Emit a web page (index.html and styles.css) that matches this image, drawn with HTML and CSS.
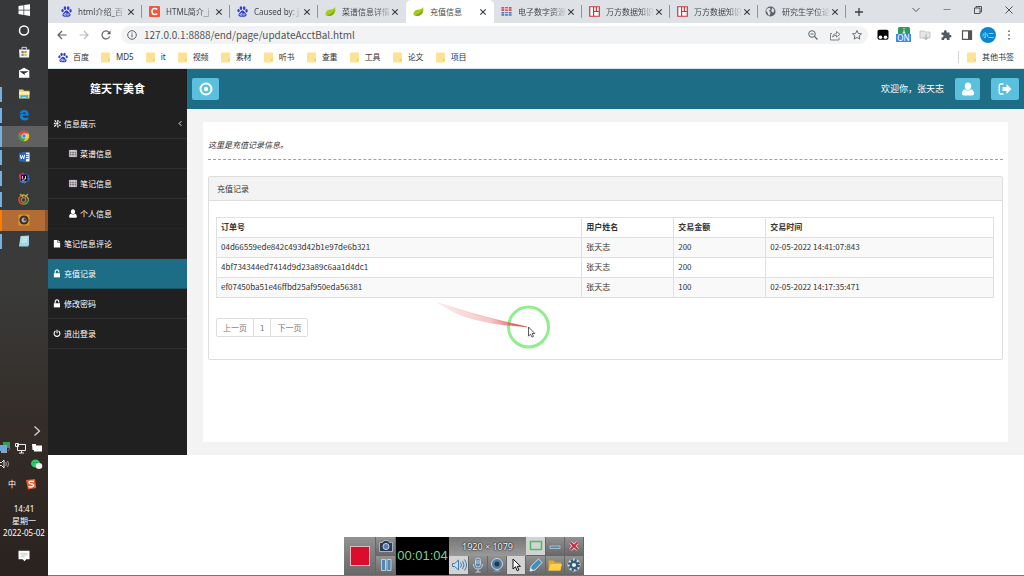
FILE: index.html
```html
<!DOCTYPE html>
<html lang="zh-CN">
<head>
<meta charset="utf-8">
<title>充值信息</title>
<link rel="stylesheet" href="styles.css">
</head>
<body>
<svg class="defs" aria-hidden="true">
  <symbol id="paw" viewBox="0 0 12 12"><g fill="#2e3fd0"><ellipse cx="4.3" cy="2.3" rx="1.4" ry="2"/><ellipse cx="7.8" cy="2.3" rx="1.4" ry="2"/><ellipse cx="1.7" cy="5" rx="1.3" ry="1.8"/><ellipse cx="10.4" cy="5.2" rx="1.3" ry="1.8"/><path d="M6 5c1.800 0 2.200 1.800 3.500 2.900 1.600 1.500.8 3.700-1.200 3.700H3.700C1.700 11.600.9 9.400 2.500 7.900 3.800 6.800 4.200 5 6 5z"/></g><path d="M5.300 7.300v2.900H4.200c-1.300 0-1.300-1.900 0-1.900h1M6.700 8.100v1.600c0 .6 1.700.6 1.700 0V8.100" fill="none" stroke="#fff" stroke-width=".7"/></symbol>
  <symbol id="leaf" viewBox="0 0 12 12"><path d="M.8 10.200C-.4 4.500 4 4 7 3.700 9.300 3.400 10.300 2.500 10.900 1.200c1.500 5.100-1.200 9.500-6 9.500-1 0-2-.1-2.800-.6z" fill="#a8ca1c"/><path d="M1.200 10.300C4.500 9.800 8.500 8.300 10.500 4c-.3 4.500-3 6.700-6.300 6.700-1.200 0-2.200-.1-3-.4z" fill="#6b9e18"/></symbol>
  <symbol id="wan" viewBox="0 0 12 12"><path d="M.8.800h10.400v10.400H.8zM5 .8v10.400M5 6h6M8 .8V6" fill="#fff" stroke="#c8343a" stroke-width="1.300"/></symbol>
  <symbol id="globe" viewBox="0 0 12 12"><circle cx="6" cy="6" r="5.500" fill="#5f6368"/><path d="M1 5l2-2.500 2.500-.5.500 2-2 1.200 2 1.300-.5 3-1.500 1-1-3zM8 2l2 2-.5 3-2-.5-.5-2z" fill="#dee1e6"/></symbol>
  <symbol id="folder" viewBox="0 0 10 11"><path d="M0 1.500Q0 .5 1 .5h7q1 0 1 1v8q0 1-1 1H1q-1 0-1-1z" fill="#fde293"/><path d="M7 7h1.500v1.500H7z" fill="#e9c35e"/></symbol>
  <symbol id="x" viewBox="0 0 8 8"><path d="M1.300 1.300l5.400 5.400M6.700 1.300L1.300 6.700" fill="none" stroke="#3c4043" stroke-width="1.200"/></symbol>
  <symbol id="table" viewBox="0 0 10 10"><path d="M1 1.500h8v7H1z" fill="#b9b4bd"/><path d="M1 1.500h8v7H1zM1 4h8M1 6.200h8M3.700 1.500v7M6.300 1.500v7" fill="none" stroke="#f0e6ee" stroke-width=".7"/><path d="M1.400 4.100h2M4 4.100h2M6.700 4.100h2M1.400 6.300h2M4 6.300h2M6.700 6.300h2" stroke="#39353b" stroke-width=".8"/></symbol>
  <symbol id="user" viewBox="0 0 14 14"><path d="M7 .5c2 0 3.300 1.500 3.300 3.700S8.800 8 7 8 3.700 6.400 3.700 4.200 5 .5 7 .5zM4 7.300C5 9 9 9 10 7.300c2 .4 3 2 3 4.200 0 1.200-.7 2-1.800 2H2.800c-1.100 0-1.800-.8-1.800-2 0-2.200 1-3.800 3-4.200z" fill="#fff"/></symbol>
  <symbol id="lock" viewBox="0 0 10 10"><path d="M1.500 4.700h6.800v4.600H1.500z" fill="#fff"/><path d="M3 5V3q0-2 2-2t2 2v.8" fill="none" stroke="#fff" stroke-width="1.200"/></symbol>
</svg>

<aside class="taskbar">
  <nav class="apps" aria-label="任务栏">
    <button class="app" aria-label="开始"><svg viewBox="0 0 14 14"><path d="M1.500 3l5-.8v4.500h-5zM7.200 2.100L13 1.200v5.500H7.200zM1.500 7.400h5v4.500l-5-.8zM7.200 7.400H13v5.500L7.200 12z" fill="#fff"/></svg></button>
    <button class="app" aria-label="Cortana"><svg viewBox="0 0 14 14"><circle cx="7" cy="6.500" r="4.500" fill="none" stroke="#fff" stroke-width="1.500"/></svg></button>
    <button class="app" aria-label="应用商店"><svg viewBox="0 0 14 14"><path d="M2 4.500h10.500l-.5 8H2.500z" fill="#f4f4f4"/><path d="M5 4.500V2.300h4.400v2.200" fill="none" stroke="#ddd" stroke-width="1"/><path d="M4.500 6h2.200v2.200H4.500z" fill="#e8512b"/><path d="M7.400 6h2.200v2.200H7.400z" fill="#7eb532"/><path d="M4.500 8.900h2.200V11H4.500z" fill="#34a5de"/><path d="M7.400 8.900h2.200V11H7.400z" fill="#f5b52a"/></svg></button>
    <button class="app" aria-label="邮件"><svg viewBox="0 0 14 14"><path d="M2 4.500L7 1.800l5.300 2.700v7.200H2z" fill="#fff"/><path d="M2.500 5.300h9.200L7.200 7.800l1.600 2z" fill="#333"/></svg></button>
    <button class="app open" aria-label="文件资源管理器"><svg viewBox="0 0 14 14"><path d="M2 2.500h4l1 1.300h5.500v7.800H2z" fill="#f3d36e"/><path d="M2 5h10.500v2.500H2z" fill="#fff0b2"/><path d="M3.500 12V8.200h7.500V12H9.300v-2H5.200v2z" fill="#45b4dd"/></svg></button>
    <button class="app open" aria-label="Edge"><svg viewBox="0 0 14 14"><path d="M2.500 6C3 3 5 2 7.300 2c3 0 4.500 2 4.500 5.500H5.500c0 2.800 3.700 3 5.700 1.700v2.300C7 13.500 2.700 12 3 8.200 3.200 6 4.500 5 6 4.400 4.500 4.500 3.300 5.200 2.500 6zM5.600 6h3.300c0-2.400-3-2.300-3.300 0z" fill="#1180d8" fill-rule="evenodd"/></svg></button>
    <button class="app open current" aria-label="Chrome"><svg viewBox="0 0 14 14"><circle cx="7" cy="7" r="5.300" fill="#f9c81e"/><path d="M2.300 4.400A5.300 5.300 0 0 1 11.700 4.400H7L4.700 8.300z" fill="#e64234"/><path d="M2.300 4.400A5.300 5.300 0 0 0 6.500 12.300L9.200 8.400 4.700 8.300z" fill="#32a350"/><circle cx="7" cy="7" r="2.500" fill="#fff"/><circle cx="7" cy="7" r="1.900" fill="#4285f4"/></svg></button>
    <button class="app open" aria-label="Word"><svg viewBox="0 0 14 14"><path d="M6 2.500h6.500v9H6z" fill="#fff"/><path d="M8.500 4.500h3M8.500 6.500h3M8.500 8.500h3" stroke="#4a83cc"/><path d="M2 3l7-1.200v10.600L2 11.200z" fill="#2868b8"/><path d="M3.300 5l1 4 1.200-3.600 1.200 3.600 1-4.200" fill="none" stroke="#fff"/></svg></button>
    <button class="app open" aria-label="IntelliJ IDEA"><svg viewBox="0 0 14 14"><path d="M2 4l4-2.500L9 5 7 12 2.500 8z" fill="#e73370"/><path d="M8 2.500l3.500 1.200L12.500 9 8 12.500 2.500 11z" fill="#367bd9"/><path d="M4 3.500h6.500V10H4z" fill="#1b1023"/><path d="M5.500 5v3M8.500 5v3H7M5 9.200h2.500" stroke="#fff" stroke-width=".8" fill="none"/></svg></button>
    <button class="app open" aria-label="Navicat"><svg viewBox="0 0 14 14" fill="none" stroke-width="1.300"><path d="M4 4a4.300 4.300 0 0 0 2 8" stroke="#e84c35"/><path d="M6 12a4.500 4.500 0 0 0 5.500-5" stroke="#48b55c"/><path d="M4 4q4-3 7.500 3" stroke="#e9a928"/><circle cx="6.500" cy="8" r="2.300" stroke="#b87a40"/><path d="M3 2l3 3M11 2L8 5" stroke="#9dbb45"/></svg></button>
    <button class="app open recording" aria-label="录屏"><svg viewBox="0 0 14 14"><rect x="1.500" y="1.500" width="11" height="11" rx="1" fill="#e49520"/><circle cx="7" cy="7" r="4.600" fill="#303038"/><circle cx="7" cy="7" r="2.500" fill="#b9aaa0"/><circle cx="8" cy="6.500" r="1.300" fill="#463b38"/></svg></button>
    <button class="app open" aria-label="记事本"><svg viewBox="0 0 14 14"><path d="M3.500 2l8.500-.5v9.500L11 12.500H2z" fill="#a6d5dd"/><path d="M4.500 4l6-.3M4.300 6l6-.3M4 8l6-.3" stroke="#d9f0f3"/><path d="M2 12.500h9l1-1.700" stroke="#5e8b93" fill="none"/></svg></button>
  </nav>
  <div class="tray">
    <svg class="chevron" viewBox="0 0 48 18"><path d="M34.500 4.500L39.500 9l-5 4.500" fill="none" stroke="#ddd" stroke-width="1.200"/></svg>
    <svg viewBox="0 0 48 16"><path d="M3 2h7v6H3z" fill="#3a9a5b"/><path d="M0 5h7v6H0z" fill="#6ba8dd"/><path d="M1 12h6" stroke="#b8cbe0" stroke-width="1.500"/><path d="M8 11l2-3" stroke="#d74831"/><path d="M17.500 4.500h8v6h-8zM19 13h5M21.500 10.500V13M15.500 3.500h3v3h-3z" fill="none" stroke="#eee"/><path d="M34 5.500h8v6h-8zM32 4h4v2h-2v4h-1.500z" fill="#fff"/></svg>
    <svg viewBox="0 0 48 16"><path d="M0 6.500h1.500L4 4v8L1.500 9.500H0" fill="none" stroke="#eee"/><path d="M5.700 6q1.500 2 0 4M7.500 5q2.200 3 0 6" fill="none" stroke="#aaa" stroke-width=".9"/><ellipse cx="35.500" cy="7.500" rx="4.500" ry="4" fill="#27cf68"/><ellipse cx="39" cy="10" rx="3.300" ry="2.900" fill="#eee"/><circle cx="34" cy="6.500" r=".6" fill="#176b39"/><circle cx="37" cy="6.500" r=".6" fill="#176b39"/></svg>
    <div class="ime"><span>中</span><svg viewBox="0 0 12 12"><path d="M1 2l9-1 1.300 9L3 11.500z" fill="#ec5a2c"/><path d="M9 3.500Q3.500 2.500 4 4.800 4.500 6 6.500 6q3 .5 2 2Q7 9.500 3.500 8.600" fill="none" stroke="#fff" stroke-width="1.400"/></svg></div>
    <time class="clock"><span>14:41</span><span>星期一</span><span>2022-05-02</span></time>
    <button class="notice" aria-label="通知"><svg viewBox="0 0 12 12"><path d="M.5.800h11v8.500H8.300L6.500 11.200 4.700 9.300H.5z" fill="#fff"/><path d="M2.500 3.300h7M2.500 5h7M2.500 6.700h4" stroke="#aaa" stroke-width=".6"/></svg></button>
  </div>
</aside>

<div class="browser">
  <div class="tabs">
    <div class="tab"><svg><use href="#paw"/></svg><span class="fade">html介绍_百</span><button aria-label="关闭"><svg><use href="#x"/></svg></button></div>
    <div class="tab"><svg viewBox="0 0 12 12"><rect width="12" height="12" rx="1" fill="#f1573a"/><path d="M9 3.800Q8 2.700 6.300 2.700 3.200 2.700 3.200 6t3.100 3.300Q8 9.300 9 8.200" fill="none" stroke="#fff" stroke-width="1.500"/></svg><span class="fade">HTML简介_j</span><button aria-label="关闭"><svg><use href="#x"/></svg></button></div>
    <div class="tab"><svg><use href="#paw"/></svg><span class="fade">Caused by: j</span><button aria-label="关闭"><svg><use href="#x"/></svg></button></div>
    <div class="tab last"><svg><use href="#leaf"/></svg><span class="fade">菜谱信息详情</span><button aria-label="关闭"><svg><use href="#x"/></svg></button></div>
    <div class="tab active"><svg><use href="#leaf"/></svg><span>充值信息</span><button aria-label="关闭"><svg><use href="#x"/></svg></button></div>
    <div class="tab"><svg viewBox="0 0 12 12"><path d="M.5 1h3v4.500h-3zM4.500 1h3v1.800h-3zM4.500 3.500h3v2h-3zM8.500 1h3v4.500h-3z" fill="#dc4a52"/><path d="M.5 6.500h3v4h-3zM4.500 6.500h3v1.500h-3zM4.500 8.700h3v1.800h-3zM8.500 6.500h3v4h-3z" fill="#4d78bd"/><path d="M0 3.200h12M0 8.400h12" stroke="#e6d8e2" stroke-width=".6"/></svg><span class="fade">电子数字资源</span><button aria-label="关闭"><svg><use href="#x"/></svg></button></div>
    <div class="tab"><svg><use href="#wan"/></svg><span class="fade">万方数据知识</span><button aria-label="关闭"><svg><use href="#x"/></svg></button></div>
    <div class="tab"><svg><use href="#wan"/></svg><span class="fade">万方数据知识</span><button aria-label="关闭"><svg><use href="#x"/></svg></button></div>
    <div class="tab"><svg><use href="#globe"/></svg><span class="fade">研究生学位论</span><button aria-label="关闭"><svg><use href="#x"/></svg></button></div>
    <button class="newtab" aria-label="新标签页"><svg viewBox="0 0 10 10"><path d="M5 1v8M1 5h8" stroke="#3c4043" stroke-width="1.300"/></svg></button>
    <div class="window">
      <button aria-label="搜索标签"><svg viewBox="0 0 10 10"><path d="M1.500 3L5 6.500 8.500 3" fill="none" stroke="#555"/></svg></button>
      <button aria-label="最小化"><svg viewBox="0 0 10 10"><path d="M1.500 4.500h7" stroke="#888"/></svg></button>
      <button aria-label="还原"><svg viewBox="0 0 10 10"><path d="M1.500 3h5.500v5.500H1.500zM3 3V1.500h5.500V7H7" fill="none" stroke="#444" stroke-width=".9"/></svg></button>
      <button aria-label="关闭窗口"><svg viewBox="0 0 10 10"><path d="M1.500 1.500l7 7M8.500 1.500l-7 7" stroke="#444" stroke-width=".9"/></svg></button>
    </div>
  </div>

  <div class="toolbar">
    <button aria-label="后退"><svg viewBox="0 0 12 12"><path d="M10.500 6H2M6 2L2 6l4 4" fill="none" stroke="#5f6368" stroke-width="1.200"/></svg></button>
    <button aria-label="前进"><svg viewBox="0 0 12 12"><path d="M1.500 6H10M6 2l4 4-4 4" fill="none" stroke="#bbb" stroke-width="1.200"/></svg></button>
    <button aria-label="重新加载"><svg viewBox="0 0 12 12"><path d="M9.700 7.500A4 4 0 1 1 9 3.300L10 4.500" fill="none" stroke="#5f6368" stroke-width="1.200"/><path d="M10.500 1.500v3.700H6.800z" fill="#5f6368"/></svg></button>
    <div class="omnibox">
      <svg viewBox="0 0 12 12"><circle cx="6" cy="6" r="4.300" fill="none" stroke="#5f6368"/><path d="M6 5.300v3M6 3.400v1.100" stroke="#5f6368" stroke-width="1.100"/></svg>
      <input type="text" aria-label="地址" value="127.0.0.1:8888/end/page/updateAcctBal.html">
      <button aria-label="缩放"><svg viewBox="0 0 12 12"><circle cx="5" cy="5" r="3.300" fill="none" stroke="#5f6368"/><path d="M7.500 7.500l3 3M3.500 5h3" stroke="#5f6368" stroke-width="1.100"/></svg></button>
      <button aria-label="分享"><svg viewBox="0 0 12 12"><path d="M3 4.500H1.500V11H10V8.500M3.500 8q.5-3.500 4-3.500V2.500L11 5.300 7.500 8V6.300Q5 6.300 3.500 8z" fill="none" stroke="#777" stroke-width=".9"/></svg></button>
      <button aria-label="收藏"><svg viewBox="0 0 12 12"><path d="M6 1.500l1.300 3 3.200.3-2.400 2.100.7 3.200L6 8.400 3.200 10.100l.7-3.200L1.500 4.800l3.200-.3z" fill="none" stroke="#5f6368" stroke-width=".9"/></svg></button>
    </div>
    <div class="extensions">
      <button aria-label="脚本扩展"><svg viewBox="0 0 12 12"><rect x=".5" y=".8" width="11" height="10" rx="1.800" fill="#050505"/><circle cx="3.500" cy="8.300" r="1.800" fill="#fff"/><circle cx="8.500" cy="8.300" r="1.800" fill="#fff"/></svg></button>
      <button class="ext-on" aria-label="扩展开关"><svg viewBox="0 0 12 7"><path d="M0 1.500Q0 0 1.500 0h9Q12 0 12 1.500V7H0z" fill="#2c9c56"/><path d="M6 1v1.200M6 3v3M4.500 6h3" stroke="#fff"/></svg><span>ON</span></button>
      <button aria-label="下载扩展"><svg viewBox="0 0 12 12"><path d="M1 2h4l1 1h5v6H1z" fill="#e7e7e7" stroke="#bbb" stroke-width=".8"/><path d="M7 5v5M5 8.500L7 10.800 9 8.500" stroke="#aaa" fill="none"/></svg></button>
      <button aria-label="扩展程序"><svg viewBox="0 0 12 12"><path d="M1.500 3.500H4q-.5-2.500 1.300-2.500T6.700 3.500H9.500V6q2-.5 2 1.200T9.500 8.500V11H7Q7 9 5.500 9T4 11H1.500V8.500Q3.500 8.500 3.500 7t-2-1.200z" fill="#555a5f"/></svg></button>
      <button aria-label="侧边栏"><svg viewBox="0 0 12 12"><path d="M1.500 1.800h9v8.500h-9z" fill="none" stroke="#555" stroke-width="1.200"/><path d="M7 2h3.500v8H7z" fill="#555"/></svg></button>
      <button class="avatar">小二</button>
      <button aria-label="菜单"><svg viewBox="0 0 12 12"><path d="M5.200 1.500h1.600v1.600H5.200zM5.200 5.200h1.600v1.600H5.200zM5.200 8.900h1.600v1.600H5.200z" fill="#5f6368"/></svg></button>
    </div>
  </div>

  <nav class="bookmarks" aria-label="书签">
    <a href="#"><svg><use href="#paw"/></svg>百度</a>
    <a href="#"><svg><use href="#folder"/></svg>MD5</a>
    <a href="#"><svg><use href="#folder"/></svg>it</a>
    <a href="#"><svg><use href="#folder"/></svg>视频</a>
    <a href="#"><svg><use href="#folder"/></svg>素材</a>
    <a href="#"><svg><use href="#folder"/></svg>听书</a>
    <a href="#"><svg><use href="#folder"/></svg>查重</a>
    <a href="#"><svg><use href="#folder"/></svg>工具</a>
    <a href="#"><svg><use href="#folder"/></svg>论文</a>
    <a href="#"><svg><use href="#folder"/></svg>项目</a>
    <a href="#" class="other"><svg><use href="#folder"/></svg>其他书签</a>
  </nav>

  <div class="site">
    <aside class="sidebar">
      <h1>筵天下美食</h1>
      <ul>
        <li><a href="#"><svg viewBox="0 0 10 10"><path d="M2.500 1.500L4 3M1.500 5h2M4 6.500L2 8.500M6 1v2.500M6 7v2.500M7.500 4l1.500-1M7.500 6.500l1.500 1" stroke="#fff" stroke-width="1.400"/><circle cx="5.300" cy="5" r="1.300" fill="#fff"/></svg>信息展示<svg class="caret" viewBox="0 0 6 10"><path d="M4.500 2.500L2 5l2.500 2.500" fill="none" stroke="#fff"/></svg></a></li>
        <li class="sub"><a href="#"><svg><use href="#table"/></svg>菜谱信息</a></li>
        <li class="sub"><a href="#"><svg><use href="#table"/></svg>笔记信息</a></li>
        <li class="sub plain"><a href="#"><svg><use href="#user"/></svg>个人信息</a></li>
        <li class="plain"><a href="#"><svg viewBox="0 0 10 10"><path d="M1.500 1h4v3h3v5.500h-7zM6.300 1l2.200 2.300H6.300z" fill="#fff"/></svg>笔记信息评论</a></li>
        <li class="active"><a href="#"><svg><use href="#lock"/></svg>充值记录</a></li>
        <li><a href="#"><svg><use href="#lock"/></svg>修改密码</a></li>
        <li><a href="#"><svg viewBox="0 0 10 10"><path d="M3.300 2.300a3.200 3.200 0 1 0 3.400 0M5 .8v4" fill="none" stroke="#fff" stroke-width="1.200"/></svg>退出登录</a></li>
      </ul>
    </aside>
    <div class="page">
      <header>
        <button class="toggle" aria-label="切换菜单"><svg viewBox="0 0 14 14"><circle cx="7" cy="7" r="5.500" fill="none" stroke="#fff" stroke-width="2"/><circle cx="7" cy="7" r="2.200" fill="#fff"/></svg></button>
        <span class="welcome">欢迎你，张天志</span>
        <button class="profile" aria-label="个人信息"><svg><use href="#user"/></svg></button>
        <button class="logout" aria-label="退出登录"><svg viewBox="0 0 14 14"><path d="M5.500 2H3Q1.200 2 1.200 4v6q0 2 1.800 2h2.500" fill="none" stroke="#fff" stroke-width="1.300"/><path d="M4.500 5H8.500V2L13.500 7l-5 5V9h-4z" fill="#fff"/></svg></button>
      </header>
      <main>
        <section class="sheet">
          <p class="hint">这里是充值记录信息。</p>
          <div class="panel">
            <h2>充值记录</h2>
            <div class="panel-body">
              <table>
                <colgroup><col class="c-order"><col class="c-user"><col class="c-sum"><col></colgroup>
                <thead><tr><th>订单号</th><th>用户姓名</th><th>交易金额</th><th>交易时间</th></tr></thead>
                <tbody>
                  <tr><td>04d66559ede842c493d42b1e97de6b321</td><td>张天志</td><td>200</td><td>02-05-2022 14:41:07:843</td></tr>
                  <tr><td>4bf734344ed7414d9d23a89c6aa1d4dc1</td><td>张天志</td><td>200</td><td></td></tr>
                  <tr><td>ef07450ba51e46ffbd25af950eda56381</td><td>张天志</td><td>100</td><td>02-05-2022 14:17:35:471</td></tr>
                </tbody>
              </table>
              <nav class="pager" aria-label="分页"><a href="#">上一页</a><a href="#">1</a><a href="#">下一页</a></nav>
            </div>
          </div>
        </section>
      </main>
    </div>
  </div>
</div>

<svg class="pointer" viewBox="0 0 116 54" aria-hidden="true">
  <defs><linearGradient id="trail"><stop offset="0" stop-color="#e85c5c" stop-opacity=".1"/><stop offset=".6" stop-color="#e85c5c" stop-opacity=".35"/><stop offset="1" stop-color="#d03434"/></linearGradient></defs>
  <circle cx="92.500" cy="27" r="20" fill="none" stroke="#90ef8c" stroke-width="3"/>
  <path d="M0 2Q38 15 91 27 40 24 17 12 8 7 0 2z" fill="url(#trail)"/>
  <path d="M0 2Q38 15 91 27" fill="none" stroke="url(#trail)" stroke-width=".7"/>
  <path d="M92.500 27v9l2-1.800 1.500 3 1.500-.8-1.400-2.900h2.700z" fill="#fff" stroke="#333" stroke-width=".8"/>
</svg>

<div class="recorder">
  <button class="rec" aria-label="停止录制"></button>
  <button class="cam" aria-label="截图"><svg viewBox="0 0 16 16"><path d="M1.500 4.500h3l1.500-2h4l1.500 2h3v9h-13z" fill="#2c3b55" stroke="#bfc7d4" stroke-width=".8"/><circle cx="8" cy="8.500" r="3" fill="#547db5" stroke="#d0d8e4"/></svg></button>
  <button class="pause" aria-label="暂停"><svg viewBox="0 0 16 16"><path d="M3.500 2.500h4v11h-4zM9 2.500h4v11H9z" fill="#4f89b8" stroke="#d0e0ec" stroke-width=".8"/></svg></button>
  <output class="timer">00:01:04</output>
  <span class="size">1920 × 1079</span>
  <button class="light" aria-label="选择区域"><svg viewBox="0 0 16 16"><path d="M2.500 3.500h11v8h-11z" fill="none" stroke="#43c257" stroke-width="1.500"/></svg></button>
  <button aria-label="最小化录屏"><svg viewBox="0 0 16 16"><path d="M3 8h10v2.500H3z" fill="#4d86b4" stroke="#c7d7e4" stroke-width=".7"/></svg></button>
  <button aria-label="关闭录屏"><svg viewBox="0 0 16 16"><path d="M4.500 4.500l7 7M11.500 4.500l-7 7" stroke="#f2dada" stroke-width="3.200"/><path d="M4.500 4.500l7 7M11.500 4.500l-7 7" stroke="#c62940" stroke-width="1.800"/></svg></button>
  <button class="light" aria-label="扬声器"><svg viewBox="0 0 16 16"><path d="M1.500 6.500h2.200L7.500 3v10L3.700 9.500H1.500z" fill="#c4dff0" stroke="#3f7eac"/><path d="M9.500 5.500q2 2.500 0 5M11.500 4q3 4 0 8M13.500 2.500q4 5.500 0 11" fill="none" stroke="#3f7eac"/></svg></button>
  <button aria-label="麦克风"><svg viewBox="0 0 16 16"><rect x="5.500" y="1" width="5" height="9" rx="2.500" fill="#5686ab" stroke="#d5e1ea" stroke-width=".8"/><path d="M3.500 7q0 5 4.500 5t4.500-5M8 12v3M5.500 15h5M6 4h4M6 6h4" fill="none" stroke="#bdd2e2"/></svg></button>
  <button aria-label="摄像头"><svg viewBox="0 0 16 16"><circle cx="8" cy="7" r="5.500" fill="#4f7fa6" stroke="#c9d8e4"/><circle cx="8" cy="7" r="2.500" fill="#20394f"/><path d="M4 14.500q4-3 8 0z" fill="#8dabc2"/></svg></button>
  <button class="light" aria-label="鼠标"><svg viewBox="0 0 16 16"><path d="M5 2v10l2.500-2.200 1.700 4 1.700-.8-1.700-3.700h3.300z" fill="#fff" stroke="#111"/></svg></button>
  <button aria-label="画笔"><svg viewBox="0 0 16 16"><path d="M2 14l1.200-5L10.500 2l3.500 3.500L7 13z" fill="#3f8fbd" stroke="#e0eef5" stroke-width=".9"/><path d="M2 14l.8-3 2.200 2.200z" fill="#eef5fa"/></svg></button>
  <button aria-label="打开文件夹"><svg viewBox="0 0 16 16"><path d="M1.500 3.500h5l1.500 2h6v8H1.500z" fill="#e7aa22"/><path d="M3.500 7h11.500l-2 6.500H1.500z" fill="#ffd04b"/></svg></button>
  <button aria-label="设置"><svg viewBox="0 0 16 16"><circle cx="8" cy="8" r="6.500" fill="#d2dde2"/><circle cx="8" cy="8" r="5" fill="none" stroke="#355b70" stroke-width="2.200" stroke-dasharray="2.200 1.727"/><circle cx="8" cy="8" r="3.200" fill="#e4ecef" stroke="#355b70" stroke-width="2.200"/></svg></button>
</div>
</body>
</html>
```
FILE: styles.css
```css
* { box-sizing: border-box; }
body {
  margin: 0;
  min-height: 100vh;
  display: flex;
  position: relative;
  background: #fff;
  color: #333;
  font: 8px/12px "Noto Sans", "Noto Sans CJK SC", sans-serif;
}
button {
  margin: 0;
  padding: 0;
  border: 0;
  background: none;
  color: inherit;
  font: inherit;
  display: flex;
  align-items: center;
  justify-content: center;
  flex-shrink: 0;
}
a { color: inherit; text-decoration: none; }
svg { display: block; flex-shrink: 0; }
.defs { position: absolute; width: 0; height: 0; }

/* system taskbar */
.taskbar {
  width: 48px;
  flex-shrink: 0;
  display: flex;
  flex-direction: column;
  justify-content: space-between;
  background: linear-gradient(#363839, #3a3a39 50%, #332c27 75%, #2a221e);
  color: #fff;
}
.app { position: relative; width: 100%; height: 21px; padding-bottom: 1px; }
.app svg { width: 14px; height: 14px; }
.open::before { content: ""; position: absolute; left: 0; top: 3px; bottom: 3px; width: 2px; background: #76b0df; }
.current { background: #606060; }
.current::before, .recording::before { top: 0; bottom: 0; }
.recording { background: #b26c35; border-right: 3px solid #8d5329; padding-left: 3px; }
.recording::before { background: #ff7b00; }
.tray { display: flex; flex-direction: column; padding-bottom: 14px; }
.tray > svg { width: 48px; height: 16px; }
.tray > .chevron { height: 18px; }
.ime { display: flex; align-items: center; gap: 9px; padding: 3px 0 0 8px; height: 20px; }
.ime svg { width: 12px; height: 12px; }
.clock { display: flex; flex-direction: column; align-items: center; padding: 11px 0; }
.notice { width: 100%; height: 12px; }
.notice svg { width: 12px; height: 12px; }

/* browser frame */
.browser { flex: 1; min-width: 0; display: flex; flex-direction: column; border-bottom: 1px solid #777; }
.tabs { display: flex; height: 23px; padding-left: 6px; background: #dee1e6; }
.tab { flex: 0 1 88px; min-width: 0; display: flex; align-items: center; padding: 0 7px; color: #45484c; position: relative; }
.tab:not(.active):not(.last)::after { content: ""; position: absolute; right: 0; top: 5px; width: 1px; height: 13px; background: #92959a; }
.tab > svg { width: 11px; height: 11px; }
.tab span { flex: 1; min-width: 0; margin-left: 6px; white-space: nowrap; }
.tab .fade { mask-image: linear-gradient(to right, #000 70%, transparent); }
.tab button svg { width: 8px; height: 8px; }
.active.tab { background: #fff; border-radius: 5px 5px 0 0; }
.newtab { width: 26px; }
.newtab svg, .window svg { width: 10px; height: 10px; }
.window { display: flex; margin-left: auto; padding-bottom: 3px; }
.window button { width: 31px; }
.toolbar { display: flex; align-items: center; height: 23px; padding: 0 5px 0 3px; }
.toolbar > button { width: 22px; }
.toolbar svg { width: 12px; height: 12px; }
.omnibox { flex: 1; min-width: 0; display: flex; align-items: center; height: 18px; margin: 0 4px; padding-left: 5px; border-radius: 9px; background: #f1f3f4; }
.omnibox input { flex: 1; min-width: 0; height: 16px; margin: 0; padding: 0 6px; border: 0; background: none; color: #505357; font: 10px/16px "Noto Sans CJK SC", sans-serif; }
.omnibox button { width: 22px; }
.extensions { display: flex; align-items: center; }
.extensions > button { width: 21px; }
.extensions .ext-on { flex-direction: column; }
.extensions .ext-on svg { height: 7px; }
.ext-on span { width: 15px; line-height: 8px; background: #4285ea; color: #fff; }
.extensions .avatar { width: 16px; height: 16px; margin: 0 2px 0 3px; border-radius: 50%; background: #0b86d2; color: #fff; font-size: 6px; }
.bookmarks { display: flex; align-items: center; gap: 12px; height: 23px; padding: 0 10px; border-bottom: 1px solid #d5e5eb; }
.bookmarks a { display: flex; align-items: center; gap: 5px; }
.bookmarks svg { width: 10px; height: 11px; }
.bookmarks .other { margin-left: auto; padding-left: 8px; border-left: 1px solid #d0d3d7; }

/* recharge site */
.site { display: flex; min-height: 386px; }
.sidebar { width: 139px; flex-shrink: 0; background: #202020; color: #fff; }
.sidebar h1 { margin: 0; font-size: 11px; line-height: 40px; text-align: center; }
.sidebar ul { margin: 0; padding: 0; list-style: none; }
.sidebar li { border-bottom: 1px solid #303030; }
.sidebar .plain { border-color: #242424; }
.sidebar a { display: flex; align-items: center; gap: 2px; height: 29px; padding: 0 4px; }
.sidebar .sub a { padding-left: 20px; }
.sidebar a svg { width: 10px; height: 9px; }
.sidebar .caret { width: 6px; margin-left: auto; }
.sidebar .active { background: #1d6d86; border-color: #1b5365; }
.page { flex: 1; min-width: 0; background: #f3f3f3; }
header { display: flex; align-items: center; height: 40px; padding: 0 5px; background: #1d6d86; color: #fff; }
header button { height: 22px; border-radius: 2px; background: #5bc0de; }
header svg { width: 14px; height: 14px; }
.toggle { width: 27px; }
.logout { width: 28px; }
.profile { width: 25px; margin: 0 11px; }
.welcome { margin-left: auto; font-size: 9px; }
main { padding: 13px 16px; }
.sheet { min-height: 320px; padding: 17px 5px; background: #fff; }
.hint { margin: 0 0 16px; padding-bottom: 8px; border-bottom: 1px dashed #5fbfae; font-style: italic; }
.panel { border: 1px solid #ddd; border-radius: 2px; }
.panel h2 { margin: 0; padding: 0 8px; border-bottom: 1px solid #ddd; background: #f3f3f3; font-size: 8px; line-height: 23px; font-weight: 400; }
.panel-body { padding: 16px 8px 22px 7px; font-family: "Noto Sans CJK SC", sans-serif; }
table { width: 100%; border-collapse: collapse; table-layout: fixed; }
.c-order { width: 47%; }
.c-user, .c-sum { width: 92px; }
th, td { height: 20px; padding: 0 4px 1px; border: 1px solid #e0e0e0; text-align: left; line-height: 12px; }
tbody tr:nth-child(odd) { background: #f9f9f9; }
.pager { display: flex; width: fit-content; margin-top: 20px; border: 1px solid #ddd; border-radius: 2px; color: #777; }
.pager a { padding: 0 6px; line-height: 17px; }
.pager a + a { border-left: 1px solid #ddd; }

/* overlays on the desktop */
.pointer { position: absolute; left: 436px; top: 300px; width: 116px; height: 54px; }
.recorder {
  position: absolute;
  left: 344px;
  bottom: 1px;
  display: grid;
  grid-template: 19px 19px / 32px 20px 53px 20px 19px 19px 19px 20px 19px 19px;
  background: #777;
}
.recorder button { background: linear-gradient(#929292, #696969); border: solid #666; border-width: 0 1px 1px 0; }
.recorder svg { width: 16px; height: 16px; }
.recorder .rec { grid-row: span 2; }
.rec::before { content: ""; width: 18px; height: 18px; background: #dc0c2d; border: 1px solid #e9b8bf; }
.recorder .cam { grid-area: 1 / 2; }
.recorder .pause { grid-area: 2 / 2; }
.timer { grid-area: 1 / 3 / span 2; background: #000; color: #84cf88; font: 13px/38px "Liberation Sans", sans-serif; text-align: center; white-space: nowrap; }
.size { grid-column: span 4; background: linear-gradient(#777, #999); color: #fff; font-size: 9px; line-height: 19px; text-align: center; text-shadow: 0 0 2px #000, 0 0 1px #000; }
.recorder .light { background: #d3d3d3; }
```
